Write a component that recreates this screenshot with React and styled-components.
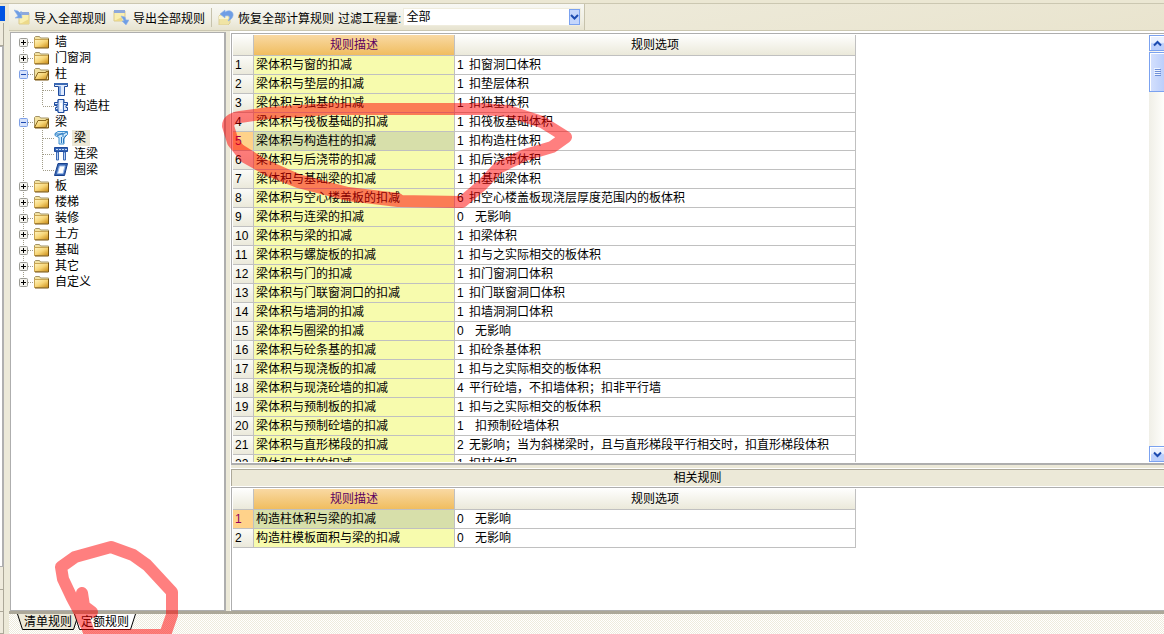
import React, { useState } from "react";
import styled, { createGlobalStyle } from "styled-components";

const face = "#ece9d8";
const line = "#aca899";
const grid = "#c0c0c0";

const GlobalStyle = createGlobalStyle`
  * { box-sizing: border-box; }
  html, body { margin: 0; padding: 0; }
  body, button, select, table {
    font-family: "Liberation Sans", "Noto Sans CJK SC", sans-serif;
    font-size: 12px;
    color: #000;
  }
  body { background: ${face}; overflow: hidden; }
`;

const Window = styled.div`
  position: relative;
  height: 100vh;
  display: flex;
  flex-direction: column;
  overflow: hidden;
  background: ${face};
`;

const TopEdge = styled.div`
  flex: none;
  height: 4px;
  background: #ebe7d3;
  border-bottom: 1px solid #cbc7b1;
`;

const Columns = styled.div`
  flex: 1;
  min-height: 0;
  display: flex;
`;

/* Neighbouring docked pane, of which only the right edge is visible */
const Dock = styled.div`
  flex: none;
  width: 5px;
  margin-right: 4px;
  padding-top: 2px;
  display: flex;
  flex-direction: column;
`;

const DockTitle = styled.div`
  height: 15px;
  background: #0054e3;
  margin-bottom: 2px;
`;

const DockButton = styled.div`
  flex: none;
  width: 4px;
  height: ${(p) => p.$height}px;
  background: #efebdd;
  border: solid ${line};
  border-width: 0 1px 1px 0;
`;

const DockList = styled.div`
  flex: 1;
  width: 4px;
  background: #fff;
  border: solid #b0b0b0;
  border-width: 1px 2px 1px 0;
`;

const Main = styled.main`
  flex: 1;
  min-width: 0;
  display: flex;
  flex-direction: column;
`;

const ToolStrip = styled.div`
  flex: none;
  height: 27px;
  display: flex;
  background: linear-gradient(170deg, #f1efe3, #e9e4ce);
  border-bottom: 1px solid #cbc7b1;
`;

const Toolbar = styled.div`
  display: flex;
  align-items: center;
  width: 576px;
  padding-left: 5px;
  background: linear-gradient(#f8f8f4, #f0efe4 60%, #e7e3cf);
  border-right: 1px solid #c6c2ac;
`;

const ToolButton = styled.button`
  display: flex;
  align-items: center;
  gap: 4px;
  height: 22px;
  margin-right: ${(p) => p.$after}px;
  padding: 0;
  border: 0;
  background: none;
  white-space: nowrap;
  svg { flex: none; }
`;

const Divider = styled.span`
  width: 1px;
  height: 19px;
  margin-right: 6px;
  background: #c6c2ac;
`;

const FilterLabel = styled.label`
  white-space: nowrap;
  margin-right: 2px;
`;

const SelectBox = styled.span`
  position: relative;
  flex: 1;
  height: 18px;
  margin-right: 3px;
  svg {
    position: absolute;
    right: 1px;
    top: 1px;
    pointer-events: none;
  }
`;

const Select = styled.select`
  appearance: none;
  display: block;
  width: 100%;
  height: 18px;
  padding: 0 14px 0 2px;
  border: 1px solid #efecdd;
  border-radius: 0;
  outline: 0;
  background: #fff;
  line-height: 16px;
`;

const Content = styled.div`
  flex: 1;
  min-height: 0;
  display: flex;
  padding-left: 1px;
`;

const Tree = styled.nav`
  flex: none;
  width: 216px;
  margin-top: 1px;
  padding: 1px 0 0;
  background: #fff;
  border: solid #aeaeae;
  border-width: 1px 2px 1px 1px;
`;

const TreeRow = styled.button`
  display: flex;
  align-items: center;
  width: 100%;
  height: 16px;
  padding: 0 0 0 8px;
  border: 0;
  background: none;
  svg { flex: none; }
`;

const TreeLabel = styled.span`
  height: 16px;
  line-height: 16px;
  margin-left: 4px;
  padding: 0 4px 0 2px;
  background: ${(p) => (p.$selected ? "#ece9d8" : "transparent")};
`;

const Right = styled.div`
  flex: 1;
  min-width: 0;
  margin-left: 4px;
  display: flex;
  flex-direction: column;
  border-left: 1px solid #fff;
`;

const WhiteEdge = styled.div`
  flex: none;
  height: 2px;
  background: #fff;
`;

const Pane = styled.section`
  flex: ${(p) => (p.$lower ? "0 0 124px" : "1 1 0")};
  min-height: 0;
  display: flex;
  justify-content: space-between;
  padding: 1px 0 1px 1px;
  background: #fff;
  border: solid #aeaeae;
  border-width: 1px 0 ${(p) => (p.$lower ? 1 : 2)}px 1px;
`;

const Clip = styled.div`
  flex: 1;
  overflow: hidden;
`;

const PaneTitle = styled.h2`
  flex: none;
  height: 19px;
  margin: 3px 0 0;
  font-size: 12px;
  font-weight: normal;
  line-height: 16px;
  text-align: center;
  border: solid #fff;
  border-width: 1px 0;
  box-shadow: inset 0 1px ${line}, inset 1px 0 ${line};
  padding-top: 1px;
`;

const Table = styled.table`
  table-layout: fixed;
  width: 623px;
  border-collapse: separate;
  border-spacing: 0;
`;

const HeadCell = styled.th`
  width: ${(p) => p.$width}px;
  height: 21px;
  padding: 0;
  font-weight: normal;
  line-height: 20px;
  color: ${(p) => (p.$active ? "#5c0060" : "#000")};
  background: ${(p) =>
    p.$active
      ? "linear-gradient(#f9d9a3, #f0bd5f)"
      : "linear-gradient(#fefefd, #ebe9da)"};
  border: solid ${grid};
  border-width: 0 1px 1px 0;
`;

const Cell = styled.td`
  height: 19px;
  padding: 0 0 0 2px;
  line-height: 18px;
  white-space: pre;
  overflow: hidden;
  background: ${(p) => p.$bg || "#fff"};
  border: solid ${grid};
  border-width: 0 1px 1px 0;
`;

const NumberCell = styled(Cell)`
  color: ${(p) => (p.$current ? "#900060" : "#000")};
  background: ${(p) =>
    p.$current ? "#ffd28a" : "linear-gradient(#fbfbf8, #ebe9db)"};
`;

const Code = styled.span`
  display: inline-block;
  width: ${(p) => (p.$wide ? 18 : 12)}px;
`;

const ScrollBar = styled.div`
  flex: none;
  width: 15px;
  overflow: hidden;
  display: flex;
  flex-direction: column;
  background: linear-gradient(90deg, #f0efe7, #fefefb);
`;

const ScrollButton = styled.button`
  flex: none;
  display: flex;
  align-items: center;
  justify-content: center;
  width: 17px;
  height: ${(p) => (p.$thumb ? 40 : 16)}px;
  padding: 0;
  border: 1px solid #7ba2f0;
  background: ${(p) =>
    p.$thumb
      ? "linear-gradient(90deg, #d5e1fd, #b9cdfb)"
      : "linear-gradient(#eaf1ff 45%, #bcd0fc 55%)"};
  box-shadow: inset 1px 1px #fff;
  margin-top: ${(p) => (p.$end ? "auto" : p.$thumb ? "1px" : 0)};
`;

const TabStrip = styled.div`
  flex: none;
  height: 23px;
  display: flex;
  align-items: flex-start;
  padding-left: 8px;
  border-top: 3px solid ${line};
  background: repeating-conic-gradient(#eeebdc 0 25%, #fff 0 50%) 0 0 / 2px 2px;
`;

const Tab = styled.button`
  position: relative;
  width: 62px;
  height: 16px;
  margin-right: -5px;
  padding: 0;
  border: 0;
  background: none;
  line-height: 15px;
  text-align: center;
  svg { position: absolute; left: 0; top: 0; }
  span { position: relative; }
`;

const Marker = styled.svg`
  position: absolute;
  left: 0;
  top: 0;
  pointer-events: none;
`;

function ImportIcon() {
  return (
    <svg width="16" height="16" viewBox="0 0 16 16">
      <path d="M5 4h10v11H5z" fill="#f9efb0" stroke="#d9c98c" />
      <path d="M5 3h10v3H5z" fill="#8ea9dc" />
      <path d="M6 15h9v-5z" fill="#ecd98a" />
      <path d="M0 1l4 1 3 3V2l1 7H1l3-2z" fill="#6f9ee4" stroke="#8fb2ea" strokeWidth=".6" />
    </svg>
  );
}

function ExportIcon() {
  return (
    <svg width="16" height="16" viewBox="0 0 16 16">
      <path d="M1 2h11v10H1z" fill="#f9efb0" stroke="#d9c98c" />
      <path d="M1 1h11v3H1z" fill="#8ea9dc" />
      <path d="M1 12h8V8z" fill="#ecd98a" />
      <path d="M8 7l4 1 1 3h3l-3 5-4-4h2l-1-2z" fill="#6f9ee4" stroke="#8fb2ea" strokeWidth=".6" />
    </svg>
  );
}

function RestoreIcon() {
  return (
    <svg width="16" height="16" viewBox="0 0 16 16">
      <path d="M1 7l2-2h9v9l-2 2H1z" fill="#f0e4a4" stroke="#dccf98" />
      <path d="M1 7h9v3H1z" fill="#faf5d0" />
      <path d="M2 5l5-4v2c5-3 9 0 8 4-1 3-3 4-5 5 2-3 3-6-3-5v2z" fill="#6f9ee4" stroke="#8fb2ea" strokeWidth=".6" />
    </svg>
  );
}

function FolderIcon({ open }) {
  return (
    <svg width="15" height="16" viewBox="0 0 15 16">
      <defs>
        <linearGradient id="folder" x1="0" y1="0" x2="1" y2="1">
          <stop offset="0" stopColor="#fff6c4" />
          <stop offset=".5" stopColor="#f7d576" />
          <stop offset="1" stopColor="#c88a14" />
        </linearGradient>
      </defs>
      <path d="M.5 13.500v-10l1-1h4l1 1.500h8v9.500z" fill="#f3e2a0" stroke="#a39366" />
      {open ? (
        <path d="M.5 13.500L4 6.500h8v-1h2.500L12 13.500z" fill="url(#folder)" stroke="#8d6a20" />
      ) : (
        <path d="M.5 5.500h14v8H.5z" fill="url(#folder)" stroke="#c9a552" />
      )}
      <path d="M1 14h13.500V5" fill="none" stroke="#7b5510" />
    </svg>
  );
}

const memberIcons = {
  column: (
    <>
      <path d="M.5 1.500h13v3h-3v9h-6v-9h-4z" fill="#dfeafc" stroke="#1e4a9c" />
      <path d="M0 1h14v2H0z" fill="#3b69b4" />
      <path d="M5 4v9h2V4z" fill="#86abe4" />
    </>
  ),
  tie: (
    <>
      <path d="M4 1.500h6v3h3.500v3H12v2h1.500v3H10v2H4v-2H1.500v-3H3v-2H.5v-3H4z" fill="#dfeafc" stroke="#1e4a9c" />
      <path d="M4 2v12M9.500 2v12M1 6.500h3M10 6.500h3M1 11.500h3" stroke="#3b69b4" fill="none" />
      <path d="M6 5h2v6H6z" fill="#fff" />
    </>
  ),
  beam: (
    <>
      <path d="M1 3.500l3-2h9.500v3L10 7.500v6.500H5V7.500L1 5.500z" fill="#cfeafb" stroke="#3e8fd0" />
      <path d="M1 4h8l4-2M9 4v3M7.500 7v6M3 6l6-3M12.500 5l-3 4v4" stroke="#2a78c0" fill="none" />
    </>
  ),
  link: (
    <>
      <path d="M.5 1.500h13v4H.5z" fill="#3564b4" stroke="#1e4a9c" />
      <path d="M2 3.500h11" stroke="#c9dcf8" strokeDasharray="2 1" />
      <path d="M2.500 6h2v8h-2zM9.500 6h2v8h-2z" fill="#b9d0f4" stroke="#3b69b4" />
    </>
  ),
  ring: (
    <>
      <path d="M4 1.500h9.500l-3 12H.5z" fill="#3b69b4" stroke="#173f8c" />
      <path d="M5.500 4h5.500l-2 7.500H3.500z" fill="#fff" stroke="#9dbcec" />
    </>
  ),
};

function MemberIcon({ kind }) {
  return (
    <svg width="14" height="16" viewBox="0 0 14 16">
      {memberIcons[kind]}
    </svg>
  );
}

const dots = { stroke: "#a09c88", strokeDasharray: "1 1", fill: "none" };

function RootGuide({ open, first, last }) {
  return (
    <svg width="15" height="16" viewBox="0 0 15 16">
      <path d={`M4.500 ${first ? 8 : 0}V${last ? 8 : 16}M9 8.500h6`} {...dots} />
      <rect x=".5" y="4.500" width="8" height="8" rx="1" fill={open ? "#d6e2fb" : "#f4f3ee"} stroke={open ? "#7d9fe6" : "#9a9a94"} />
      <path d={open ? "M2 8.500h5" : "M2 8.500h5M4.500 6v5"} stroke={open ? "#1c49b0" : "#000"} />
    </svg>
  );
}

function ChildGuide({ last }) {
  return (
    <svg width="35" height="16" viewBox="0 0 35 16">
      <path d={`M4.500 0v16M23.500 0V${last ? 8 : 16}M24 8.500h11`} {...dots} />
    </svg>
  );
}

function Chevron({ up }) {
  return (
    <svg width="9" height="7" viewBox="0 0 9 7">
      <path d={up ? "M1 5.500L4.500 2 8 5.500" : "M1 1.500L4.500 5 8 1.500"} fill="none" stroke="#1c4bb0" strokeWidth="2" />
    </svg>
  );
}

const tree = [
  { name: "墙" },
  { name: "门窗洞" },
  { name: "柱", children: [["柱", "column"], ["构造柱", "tie"]] },
  { name: "梁", children: [["梁", "beam"], ["连梁", "link"], ["圈梁", "ring"]] },
  { name: "板" },
  { name: "楼梯" },
  { name: "装修" },
  { name: "土方" },
  { name: "基础" },
  { name: "其它" },
  { name: "自定义" },
];

const rules = [
  ["梁体积与窗的扣减", "1", "扣窗洞口体积"],
  ["梁体积与垫层的扣减", "1", "扣垫层体积"],
  ["梁体积与独基的扣减", "1", "扣独基体积"],
  ["梁体积与筏板基础的扣减", "1", "扣筏板基础体积"],
  ["梁体积与构造柱的扣减", "1", "扣构造柱体积"],
  ["梁体积与后浇带的扣减", "1", "扣后浇带体积"],
  ["梁体积与基础梁的扣减", "1", "扣基础梁体积"],
  ["梁体积与空心楼盖板的扣减", "6", "扣空心楼盖板现浇层厚度范围内的板体积"],
  ["梁体积与连梁的扣减", "0", "无影响", true],
  ["梁体积与梁的扣减", "1", "扣梁体积"],
  ["梁体积与螺旋板的扣减", "1", "扣与之实际相交的板体积"],
  ["梁体积与门的扣减", "1", "扣门窗洞口体积"],
  ["梁体积与门联窗洞口的扣减", "1", "扣门联窗洞口体积"],
  ["梁体积与墙洞的扣减", "1", "扣墙洞洞口体积"],
  ["梁体积与圈梁的扣减", "0", "无影响", true],
  ["梁体积与砼条基的扣减", "1", "扣砼条基体积"],
  ["梁体积与现浇板的扣减", "1", "扣与之实际相交的板体积"],
  ["梁体积与现浇砼墙的扣减", "4", "平行砼墙，不扣墙体积；扣非平行墙"],
  ["梁体积与预制板的扣减", "1", "扣与之实际相交的板体积"],
  ["梁体积与预制砼墙的扣减", "1", "扣预制砼墙体积", true],
  ["梁体积与直形梯段的扣减", "2", "无影响；当为斜梯梁时，且与直形梯段平行相交时，扣直形梯段体积"],
  ["梁体积与柱的扣减", "1", "扣柱体积"],
];

const related = [
  ["构造柱体积与梁的扣减", "0", "无影响", true],
  ["构造柱模板面积与梁的扣减", "0", "无影响", true],
];

function RuleTable({ rows, initial }) {
  const [current, setCurrent] = useState(initial);
  return (
    <Table>
      <thead>
        <tr>
          <HeadCell $width={21} />
          <HeadCell $width={201} $active>规则描述</HeadCell>
          <HeadCell $width={401}>规则选项</HeadCell>
        </tr>
      </thead>
      <tbody>
        {rows.map(([text, code, option, wide], i) => (
          <tr key={text} onClick={() => setCurrent(i)}>
            <NumberCell $current={i === current}>{i + 1}</NumberCell>
            <Cell $bg={i === current ? "#d7dfaa" : "#f7fbad"}>{text}</Cell>
            <Cell>
              <Code $wide={wide}>{code}</Code>
              {option}
            </Cell>
          </tr>
        ))}
      </tbody>
    </Table>
  );
}

function BottomTab({ label, active }) {
  return (
    <Tab>
      <svg width="62" height="16" viewBox="0 0 62 16">
        <path d="M.5 0l5 15.500h51L61.500 0" fill={active ? "#fff" : face} stroke="#000" />
      </svg>
      <span>{label}</span>
    </Tab>
  );
}

export default function App() {
  return (
    <Window>
      <GlobalStyle />
      <TopEdge />
      <Columns>
        <Dock>
          <DockTitle />
          <DockButton $height={23} />
          <DockList />
          <DockButton $height={23} />
          <DockButton $height={22} />
          <DockButton $height={22} />
        </Dock>
        <Main>
          <ToolStrip>
            <Toolbar>
              <ToolButton $after={7}><ImportIcon />导入全部规则</ToolButton>
              <ToolButton $after={6}><ExportIcon />导出全部规则</ToolButton>
              <Divider />
              <ToolButton $after={4}><RestoreIcon />恢复全部计算规则</ToolButton>
              <FilterLabel htmlFor="filter">过滤工程量:</FilterLabel>
              <SelectBox>
                <Select id="filter">
                  <option>全部</option>
                </Select>
                <svg width="11" height="16" viewBox="0 0 11 16">
                  <rect x=".5" y=".5" width="10" height="15" fill="#c4d6fc" stroke="#7ba2f0" />
                  <path d="M2 6l3.500 3.500L9 6" fill="none" stroke="#1c4bb0" strokeWidth="2" />
                </svg>
              </SelectBox>
            </Toolbar>
          </ToolStrip>
          <Content>
            <Tree aria-label="构件">
              {tree.map((node, i) => (
                <React.Fragment key={node.name}>
                  <TreeRow>
                    <RootGuide open={!!node.children} first={i === 0} last={i === tree.length - 1} />
                    <FolderIcon open={!!node.children} />
                    <TreeLabel>{node.name}</TreeLabel>
                  </TreeRow>
                  {node.children?.map(([name, kind], k) => (
                    <TreeRow key={name}>
                      <ChildGuide last={k === node.children.length - 1} />
                      <MemberIcon kind={kind} />
                      <TreeLabel $selected={kind === "beam"}>{name}</TreeLabel>
                    </TreeRow>
                  ))}
                </React.Fragment>
              ))}
            </Tree>
            <Right>
              <WhiteEdge />
              <Pane>
                <Clip>
                  <RuleTable rows={rules} initial={4} />
                </Clip>
                <ScrollBar>
                  <ScrollButton aria-label="向上"><Chevron up /></ScrollButton>
                  <ScrollButton $thumb aria-label="滚动">
                    <svg width="7" height="8" viewBox="0 0 7 8">
                      <path d="M0 .5h6M0 2.500h6M0 4.500h6M0 6.500h6" stroke="#eef4fe" />
                      <path d="M1 1.500h6M1 3.500h6M1 5.500h6M1 7.500h6" stroke="#6f8fd8" />
                    </svg>
                  </ScrollButton>
                  <ScrollButton $end aria-label="向下"><Chevron /></ScrollButton>
                </ScrollBar>
              </Pane>
              <PaneTitle>相关规则</PaneTitle>
              <Pane $lower>
                <Clip>
                  <RuleTable rows={related} initial={0} />
                </Clip>
              </Pane>
            </Right>
          </Content>
          <TabStrip>
            <BottomTab label="清单规则" />
            <BottomTab label="定额规则" active />
          </TabStrip>
        </Main>
      </Columns>
      <Marker width="600" height="634" viewBox="0 0 600 634" aria-hidden="true">
        <g fill="none" stroke="#f00" strokeWidth="12" strokeLinecap="round" strokeLinejoin="round" opacity=".5">
          <path d="M415 109L330 109L268 113L240 117Q228 119 228 126L233 142L245 157L268 170L298 182L348 195L398 201L462 202L482 185L498 168L525 155L552 147L566 137L542 122L508 111L482 109Z" />
          <path d="M240 150L262 164L298 180L348 193L398 199" />
          <path d="M92 612L84 606L82 593L83 612M87 627L80 613L72 598L63 579L61 567L75 557L111 547L133 555L147 565L172 592V615L165 635H90L84 619" />
        </g>
      </Marker>
    </Window>
  );
}
